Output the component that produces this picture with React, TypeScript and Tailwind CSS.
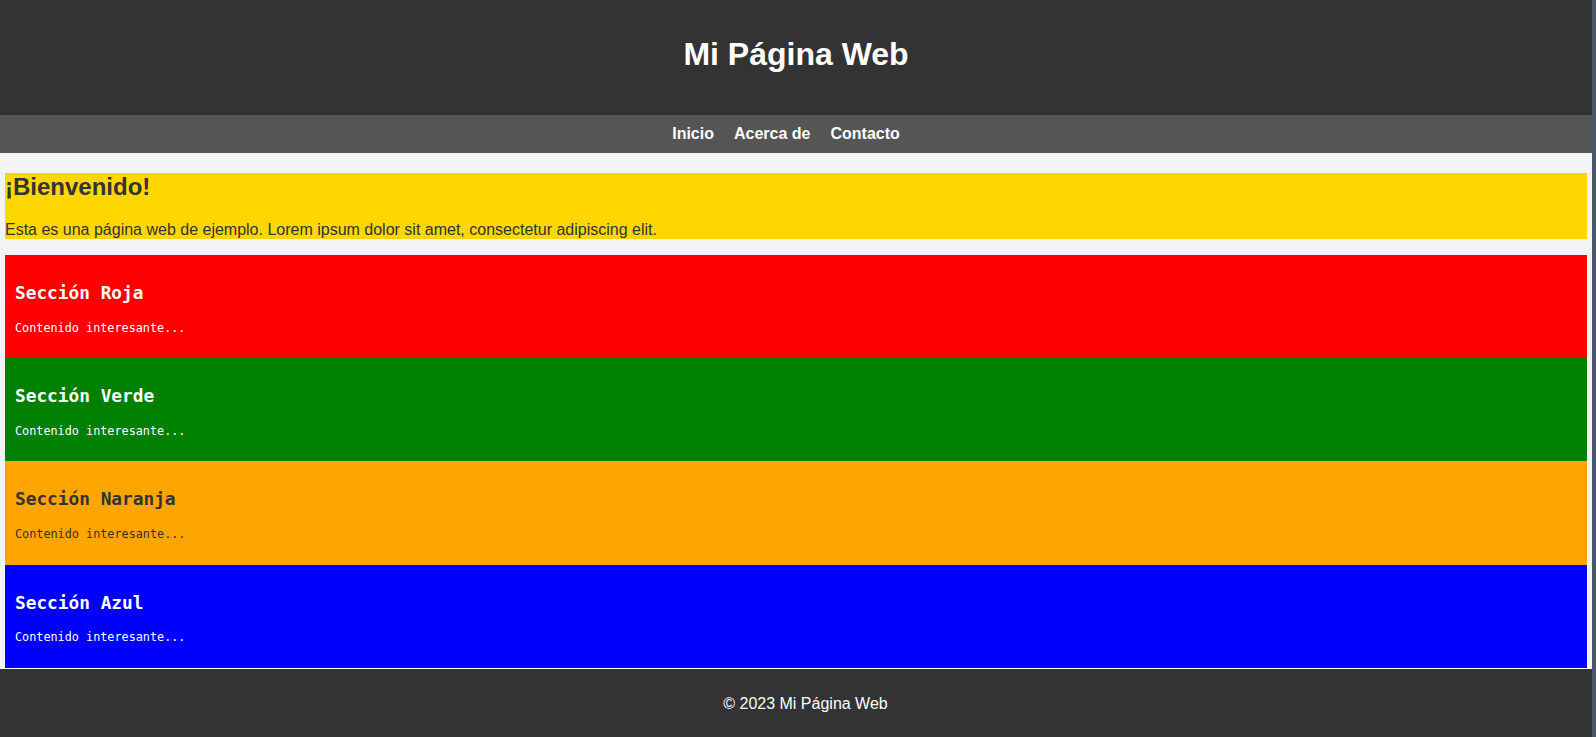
const sections = [
  { title: "Sección Roja", bg: "bg-[#ff0000]", text: "text-white" },
  { title: "Sección Verde", bg: "bg-[#008000]", text: "text-white" },
  { title: "Sección Naranja", bg: "bg-[#ffa500]", text: "text-[#333]" },
  { title: "Sección Azul", bg: "bg-[#0000ff]", text: "text-white" },
];

const links = ["Inicio", "Acerca de", "Contacto"];

const App = () => {
  return (
    <div className="flex h-screen overflow-hidden bg-[#4a586a] font-['Liberation_Sans',Arial,sans-serif] text-[#333]">
      <div className="flex-1 flex flex-col bg-white">
        {/* Header */}
        <header className="bg-[#333] pt-[36px] pb-[42px] text-center">
          <h1 className="text-[32px] leading-[37px] font-bold text-white">
            Mi Página Web
          </h1>
        </header>
        {/* Nav */}
        <nav className="bg-[#555] py-[10px] flex justify-center">
          {links.map((l) => (
            <a
              key={l}
              href="#"
              className="mr-5 text-base leading-[18px] font-bold text-white"
            >
              {l}
            </a>
          ))}
        </nav>
        {/* Main */}
        <main className="bg-[#f4f4f4] px-[5px] pt-[20px]">
          <section className="bg-[#ffd700]">
            <h2 className="text-2xl leading-[27.6px] font-bold">
              ¡Bienvenido!
            </h2>
            <p className="mt-[20px] text-base leading-[18.4px]">
              Esta es una página web de ejemplo. Lorem ipsum dolor sit amet,
              consectetur adipiscing elit.
            </p>
          </section>
          <div className="mt-4">
            {sections.map((s) => (
              <section
                key={s.title}
                className={`${s.bg} ${s.text} px-[10px] py-[10px] font-['DejaVu_Sans_Mono',monospace]`}
              >
                <h2 className="mt-[17px] mb-[16px] text-[17.8px] leading-[22.8px] font-bold">
                  {s.title}
                </h2>
                <p className="mb-[12.2px] text-[11.8px] leading-[15.2px]">
                  Contenido interesante...
                </p>
              </section>
            ))}
          </div>
        </main>
        <div className="h-px bg-white" />
        {/* Footer */}
        <footer className="bg-[#333] pt-[26px] pb-[24px] pl-[19px] text-center text-white">
          <p className="text-base leading-[18.4px]">© 2023 Mi Página Web</p>
        </footer>
      </div>
      <div className="w-[4px] shrink-0 bg-[#4a586a]" />
    </div>
  );
};

export default App;
